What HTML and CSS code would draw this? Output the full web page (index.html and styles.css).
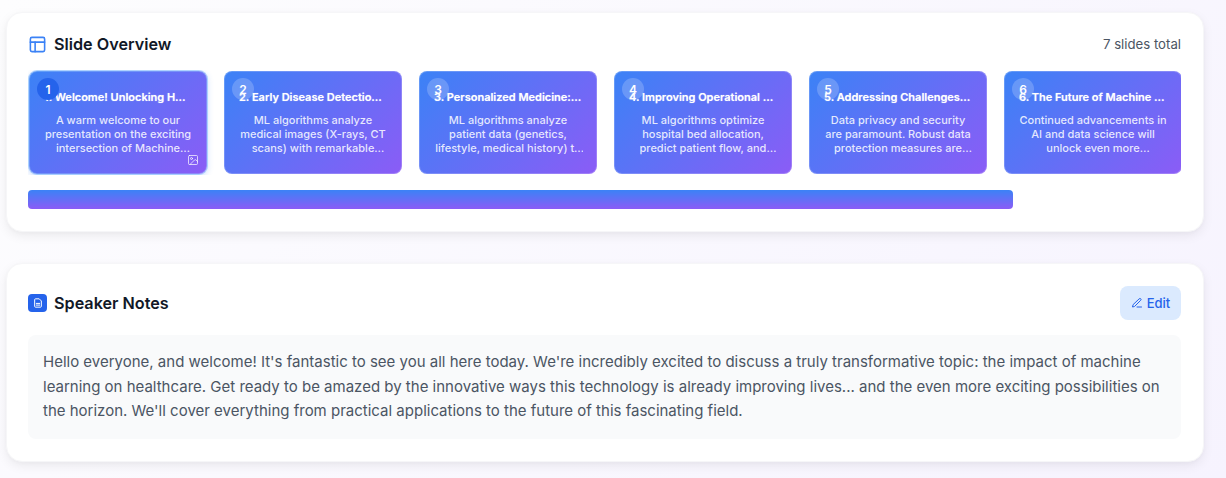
FILE: index.html
```html
<!DOCTYPE html>
<html lang="en">
<head>
    <meta charset="UTF-8">
    <meta name="viewport" content="width=device-width, initial-scale=1.0">
    <title>Slide Overview</title>
    <link rel="stylesheet" href="styles.css">
</head>
<body>
    <section class="panel">
        <div class="panel-header">
            <h2 class="panel-title">
                <svg class="layout-icon" viewBox="0 0 24 24" fill="none" stroke="currentColor" stroke-width="2" stroke-linecap="round" stroke-linejoin="round"><rect x="3" y="3" width="18" height="18" rx="2"/><path d="M3 9h18"/><path d="M9 21V9"/></svg>
                Slide Overview
            </h2>
            <span class="slide-count">7 slides total</span>
        </div>
        <div class="slide-track">
            <div class="slide active">
                <span class="badge">1</span>
                <div class="slide-title">1. Welcome! Unlocking Healthcare's Future</div>
                <p class="slide-text">A warm welcome to our presentation on the exciting intersection of Machine Learning and Healthcare today.</p>
                <svg class="image-icon" viewBox="0 0 24 24" fill="none" stroke="currentColor" stroke-width="2" stroke-linecap="round" stroke-linejoin="round"><rect x="3" y="3" width="18" height="18" rx="2"/><circle cx="9" cy="9" r="2"/><path d="m21 15-3.1-3.1a2 2 0 0 0-2.8 0L6 21"/></svg>
            </div>
            <div class="slide">
                <span class="badge">2</span>
                <div class="slide-title">2. Early Disease Detection with AI</div>
                <p class="slide-text">ML algorithms analyze medical images (X-rays, CT scans) with remarkable accuracy and speed every day.</p>
            </div>
            <div class="slide">
                <span class="badge">3</span>
                <div class="slide-title">3. Personalized Medicine: Tailored Care</div>
                <p class="slide-text">ML algorithms analyze patient data (genetics, lifestyle, medical history) to tailor treatment for each person.</p>
            </div>
            <div class="slide">
                <span class="badge">4</span>
                <div class="slide-title">4. Improving Operational Efficiency</div>
                <p class="slide-text">ML algorithms optimize hospital bed allocation, predict patient flow, and reduce waiting times for everyone.</p>
            </div>
            <div class="slide">
                <span class="badge">5</span>
                <div class="slide-title">5. Addressing Challenges and Ethics</div>
                <p class="slide-text">Data privacy and security are paramount. Robust data protection measures are essential for patient trust.</p>
            </div>
            <div class="slide">
                <span class="badge">6</span>
                <div class="slide-title">6. The Future of Machine Learning</div>
                <p class="slide-text">Continued advancements in AI and data science will unlock even more possibilities for care and research.</p>
            </div>
            <div class="slide">
                <span class="badge">7</span>
                <div class="slide-title">7. Thank You and Questions</div>
                <p class="slide-text">Thank you for joining us today. We would love to hear your questions and your thoughts.</p>
            </div>
        </div>
        <div class="track-thumb"></div>
    </section>

    <section class="panel">
        <div class="panel-header notes-header">
            <h2 class="panel-title">
                <span class="notes-icon">
                    <svg viewBox="0 0 24 24" fill="none" stroke="currentColor" stroke-width="2.4" stroke-linecap="round" stroke-linejoin="round"><path d="M14 2H6a2 2 0 0 0-2 2v16a2 2 0 0 0 2 2h12a2 2 0 0 0 2-2V8z"/><path d="M8 13h8"/><path d="M8 17h8"/></svg>
                </span>
                Speaker Notes
            </h2>
            <button class="edit-btn">
                <svg viewBox="0 0 24 24" fill="none" stroke="currentColor" stroke-width="2" stroke-linecap="round" stroke-linejoin="round"><path d="M12 20h9"/><path d="M16.5 3.5a2.12 2.12 0 0 1 3 3L7 19l-4 1 1-4z"/></svg>
                Edit
            </button>
        </div>
        <div class="notes-body">Hello everyone, and welcome! It's fantastic to see you all here today. We're incredibly excited to discuss a truly transformative topic: the impact of machine learning on healthcare. Get ready to be amazed by the innovative ways this technology is already improving lives... and the even more exciting possibilities on the horizon. We'll cover everything from practical applications to the future of this fascinating field.</div>
    </section>
</body>
</html>
```

FILE: styles.css
```css
* {
    box-sizing: border-box;
}
body {
    margin: 0;
    height: 478px;
    padding: 12px 22px 0 6px;
    overflow: hidden;
    display: flex;
    flex-direction: column;
    gap: 31px;
    background: linear-gradient(135deg, #fdfdfe, #f6f3fe);
    font-family: Inter, "Liberation Sans", sans-serif;
}
.panel {
    padding: 22px 22px 22px 21px;
    background-color: white;
    border: 1px solid #f6f6f8;
    border-radius: 16px;
    box-shadow: 0 4px 12px -1px rgba(0, 0, 0, 0.08), 0 1px 4px rgba(0, 0, 0, 0.02);
}
.panel-header {
    display: flex;
    justify-content: space-between;
    align-items: center;
    height: 18px;
    margin-bottom: 17px;
}
.notes-header {
    height: 34px;
    margin-bottom: 15px;
}
.panel-title {
    display: flex;
    align-items: center;
    gap: 7px;
    margin: 0;
    font-size: 16.2px;
    font-weight: 600;
    color: #111827;
}
.layout-icon {
    width: 19px;
    height: 19px;
    color: #3b82f6;
}
.slide-count {
    font-size: 13.2px;
    color: #4b5563;
}
.slide-track {
    display: flex;
    gap: 17px;
    padding: 1px 0 1px 1px;
    overflow: hidden;
}
.slide {
    position: relative;
    flex-shrink: 0;
    width: 178px;
    height: 103px;
    padding: 18px 14px 0;
    border: 1px solid rgba(255, 255, 255, 0.2);
    border-radius: 8px;
    background: linear-gradient(135deg, #3b82f6, #8b5cf6) border-box;
    color: white;
    text-align: center;
}
.slide.active {
    border-color: rgba(147, 197, 253, 0.4);
    box-shadow: 0 0 0 1px rgba(147, 197, 253, 0.7), 0 2px 6px rgba(59, 130, 246, 0.3);
}
.badge {
    position: absolute;
    top: 6px;
    left: 7px;
    width: 22px;
    height: 22px;
    display: flex;
    justify-content: center;
    align-items: center;
    border-radius: 50%;
    background-color: rgba(255, 255, 255, 0.2);
    font-size: 12px;
    font-weight: 600;
}
.active .badge {
    background-color: #2563eb;
}
.slide-title {
    margin-bottom: 9px;
    overflow: hidden;
    white-space: nowrap;
    text-overflow: ellipsis;
    font-size: 11px;
    font-weight: 600;
    line-height: 14px;
    text-shadow: 0 0 1px rgba(255, 255, 255, 0.6);
}
.slide-text {
    margin: 0 -1px;
    display: -webkit-box;
    -webkit-box-orient: vertical;
    -webkit-line-clamp: 3;
    overflow: hidden;
    font-size: 11px;
    font-weight: 500;
    line-height: 14px;
    color: rgba(255, 255, 255, 0.85);
}
.image-icon {
    position: absolute;
    right: 7px;
    bottom: 7px;
    width: 12px;
    height: 12px;
    color: rgba(255, 255, 255, 0.7);
}
.track-thumb {
    width: 985px;
    height: 19px;
    margin-top: 15px;
    border-radius: 4px;
    background: linear-gradient(180deg, #3b82f6, #8b5cf6);
}
.notes-icon {
    width: 19px;
    height: 18px;
    display: flex;
    justify-content: center;
    align-items: center;
    border-radius: 4px;
    background-color: #2563eb;
    color: white;
}
.notes-icon svg {
    width: 10px;
    height: 10px;
}
.edit-btn {
    height: 34px;
    width: 61px;
    display: flex;
    justify-content: center;
    align-items: center;
    gap: 4px;
    padding: 0;
    border: none;
    border-radius: 8px;
    background-color: #dbeafe;
    color: #2563eb;
    font-family: inherit;
    font-size: 13px;
    font-weight: 500;
}
.edit-btn svg {
    width: 12px;
    height: 12px;
}
.notes-body {
    padding: 15px;
    border-radius: 8px;
    background-color: #f9fafb;
    font-size: 15px;
    line-height: 24.5px;
    color: #4b5563;
}
```
